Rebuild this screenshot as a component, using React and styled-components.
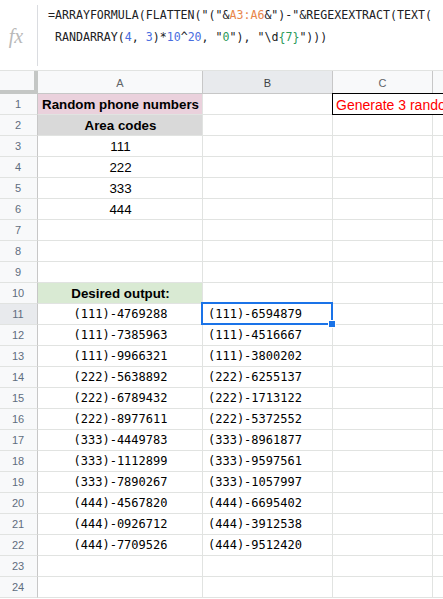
import React from "react";
import styled, { createGlobalStyle } from "styled-components";

const GlobalStyle = createGlobalStyle`
  html, body { margin: 0; padding: 0; background: #fff; }
  body { font-family: "Liberation Sans", Arial, sans-serif; overflow: hidden; }
`;

const Page = styled.div`
  width: 443px;
  height: 599px;
  overflow: hidden;
  background: #fff;
`;

const FormulaBar = styled.div`
  display: flex;
  height: 70px;
  border-bottom: 1px solid #e1e3e1;
  box-sizing: content-box;
`;

const FxBox = styled.div`
  width: 36px;
  display: flex;
  align-items: center;
  justify-content: center;
  padding-right: 1px;
`;

const Fx = styled.span`
  font-family: "Liberation Serif", "Times New Roman", serif;
  font-style: italic;
  font-size: 20px;
  color: #b9b9b9;
  margin-right: 4px;
  margin-top: 2px;
`;

const Divider = styled.div`
  width: 1px;
  margin: 5px 0 4px;
  background: #dadce0;
`;

const FormulaText = styled.div`
  flex: 1;
  padding: 4px 0 0 10px;
  font-family: "DejaVu Sans Mono", "Liberation Mono", monospace;
  font-size: 11.6px;
  line-height: 22px;
  color: #202124;
  white-space: pre;
  overflow: hidden;
`;

const Tok = styled.span`
  color: ${(p) => p.$c};
`;

const Sheet = styled.div`
  display: grid;
  grid-template-columns: 38px 165px 130px 100px 60px;
  grid-template-rows: 23px;
  grid-auto-rows: 21px;
  width: 493px;
`;

const Corner = styled.div`
  box-sizing: border-box;
  background: #f8f9fa;
  border-right: 4px solid #c4c7c5;
  border-bottom: 4px solid #c4c7c5;
`;

const ColHeader = styled.div`
  box-sizing: border-box;
  display: flex;
  align-items: center;
  justify-content: center;
  background: ${(p) => (p.$selected ? "#e8eaed" : "#f8f9fa")};
  border-right: 1px solid #c7c7c7;
  border-bottom: 1px solid #c7c7c7;
  font-size: 11px;
  color: ${(p) => (p.$selected ? "#3c4043" : "#5f6368")};
  padding-top: 1px;
`;

const RowHeader = styled.div`
  box-sizing: border-box;
  display: flex;
  align-items: center;
  justify-content: center;
  background: ${(p) => (p.$selected ? "#e8eaed" : "#f8f9fa")};
  border-right: 1px solid #c7c7c7;
  border-bottom: 1px solid #e1e3e1;
  font-size: 11px;
  color: #5f6d7e;
  padding-right: 1px;
`;

const Cell = styled.div`
  position: relative;
  box-sizing: border-box;
  display: flex;
  align-items: center;
  justify-content: ${(p) => (p.$align === "left" ? "flex-start" : "center")};
  padding: 0 4px 0 5px;
  background: ${(p) => p.$fill || "transparent"};
  border-right: 1px solid #e1e3e1;
  border-bottom: 1px solid #e1e3e1;
  font-family: ${(p) =>
    p.$mono
      ? `"DejaVu Sans Mono", "Liberation Mono", monospace`
      : `"Liberation Sans", Arial, sans-serif`};
  font-size: ${(p) => (p.$mono ? "12px" : "13.33px")};
  font-weight: ${(p) => (p.$bold ? 700 : 400)};
  color: #000;
  white-space: nowrap;
  overflow: visible;
`;

const NoteCell = styled.div`
  position: relative;
  z-index: 1;
  grid-column: span 2;
  box-sizing: border-box;
  margin: -1px 0 0 -1px;
  border: 1px solid #000;
  display: flex;
  align-items: center;
  padding: 1px 0 0 3px;
  font-size: 14px;
  color: #ff0000;
  white-space: nowrap;
  overflow: hidden;
  background: #fff;
`;

const Selection = styled.div`
  position: absolute;
  left: -2px;
  top: -2px;
  right: -1px;
  bottom: -1px;
  border: 2px solid #1a73e8;
  pointer-events: none;
  z-index: 2;
`;

const Handle = styled.div`
  position: absolute;
  right: -5px;
  bottom: -5px;
  width: 6px;
  height: 6px;
  background: #1a73e8;
  border: 1px solid #fff;
`;

const areaCodes = ["111", "222", "333", "444"];
const colA = [
  "(111)-4769288", "(111)-7385963", "(111)-9966321",
  "(222)-5638892", "(222)-6789432", "(222)-8977611",
  "(333)-4449783", "(333)-1112899", "(333)-7890267",
  "(444)-4567820", "(444)-0926712", "(444)-7709526",
];
const colB = [
  "(111)-6594879", "(111)-4516667", "(111)-3800202",
  "(222)-6255137", "(222)-1713122", "(222)-5372552",
  "(333)-8961877", "(333)-9597561", "(333)-1057997",
  "(444)-6695402", "(444)-3912538", "(444)-9512420",
];

function rowCells(r) {
  const cells = [];
  if (r === 1) {
    cells.push(<Cell key="a" $fill="#ead1dc" $bold>Random phone numbers</Cell>);
    cells.push(<Cell key="b" />);
    cells.push(<NoteCell key="c">Generate 3 random phone numbers for each area code</NoteCell>);
    return cells;
  }
  let a = null, b = null, aProps = {}, bProps = {};
  if (r === 2) { a = "Area codes"; aProps = { $fill: "#d9d9d9", $bold: true }; }
  else if (r >= 3 && r <= 6) { a = areaCodes[r - 3]; }
  else if (r === 10) { a = "Desired output:"; aProps = { $fill: "#d9ead3", $bold: true }; }
  else if (r >= 11 && r <= 22) {
    a = colA[r - 11]; aProps = { $mono: true };
    b = colB[r - 11]; bProps = { $mono: true, $align: "left" };
  }
  cells.push(<Cell key="a" {...aProps}>{a}</Cell>);
  cells.push(
    <Cell key="b" {...bProps}>
      {b}
      {r === 11 && (
        <Selection>
          <Handle />
        </Selection>
      )}
    </Cell>
  );
  cells.push(<Cell key="c" />);
  cells.push(<Cell key="d" />);
  return cells;
}

export default function App() {
  const rows = Array.from({ length: 24 }, (_, i) => i + 1);
  const num = "#4a6ee0";
  const ref = "#e8864a";
  const str = "#2c9a5a";
  return (
    <Page>
      <GlobalStyle />
      <FormulaBar>
        <FxBox>
          <Fx>fx</Fx>
        </FxBox>
        <Divider />
        <FormulaText>
          {'=ARRAYFORMULA(FLATTEN("("&'}
          <Tok $c={ref}>A3:A6</Tok>
          {'&")-"&REGEXEXTRACT(TEXT(\n RANDARRAY('}
          <Tok $c={num}>4</Tok>
          {", "}
          <Tok $c={num}>3</Tok>
          {")*"}
          <Tok $c={num}>10</Tok>
          {"^"}
          <Tok $c={num}>20</Tok>
          {', "'}
          <Tok $c={str}>0</Tok>
          {'"), "\\d'}
          <Tok $c={str}>{"{7}"}</Tok>
          {'")))'}
        </FormulaText>
      </FormulaBar>
      <Sheet>
        <Corner />
        <ColHeader>A</ColHeader>
        <ColHeader $selected>B</ColHeader>
        <ColHeader>C</ColHeader>
        <ColHeader />
        {rows.map((r) => (
          <React.Fragment key={r}>
            <RowHeader $selected={r === 11}>{r}</RowHeader>
            {rowCells(r)}
          </React.Fragment>
        ))}
      </Sheet>
    </Page>
  );
}
